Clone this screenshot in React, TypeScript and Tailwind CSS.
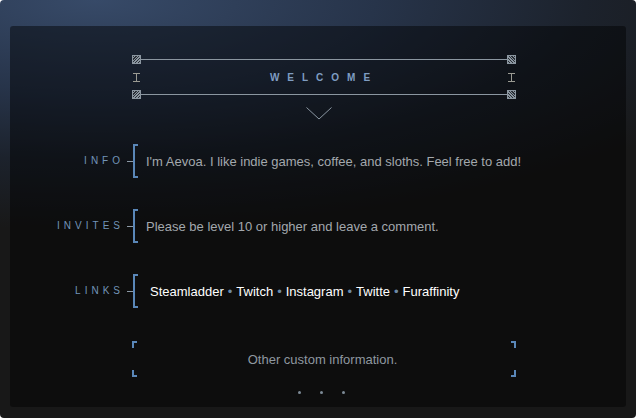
import React from "react"

const Hatch = ({ flip }: { flip?: boolean }) => (
  <div
    className={
      "h-[9px] w-[9px] shrink-0 border border-[#8b96a0] " +
      (flip
        ? "bg-[repeating-linear-gradient(45deg,#8b96a0_0px,#8b96a0_1px,#2a2f36_1px,#2a2f36_2px)]"
        : "bg-[repeating-linear-gradient(-45deg,#8b96a0_0px,#8b96a0_1px,#2a2f36_1px,#2a2f36_2px)]")
    }
  />
)

const IBeam = () => (
  <svg width="7" height="9" viewBox="0 0 7 9" className="shrink-0">
    <path d="M0 0.5H7M3.5 0.5V8.5M0 8.5H7" stroke="#9a9a92" strokeWidth="1" fill="none" />
  </svg>
)

const Row = ({ label, children, link }: { label: string; children: React.ReactNode; link?: boolean }) => (
  <div className="flex h-[34px] items-center">
    <div className="w-[114px] text-right text-[10px] leading-none tracking-[4px] text-[#7294b8]">
      {label}
    </div>
    <div className="ml-[3px] h-px w-[6px] bg-[#8d9aa6]" />
    <div className="h-[34px] w-[5px] border-y-2 border-l-2 border-[#5a87b8]" />
    <div className={link ? "ml-[12px] leading-none" : "ml-[8px] leading-none"}>{children}</div>
  </div>
)

const Sep = () => <span className="mx-[4px] text-[#6d8aa6]">•</span>

export default function App() {
  return (
    <div className="h-[418px] w-[636px] overflow-hidden rounded-[4px] bg-[#181818] font-['Liberation_Sans',Arial,sans-serif]">
      <div className="h-full w-full bg-[radial-gradient(ellipse_110%_55%_at_15%_0%,#374a68_0%,#27344a_40%,#1c222c_70%,#181818_100%)] px-[10px] pb-[11px] pt-[26px]">
        <div className="flex h-full flex-col rounded-[3px] bg-black/45">
          {/* header */}
          <div className="ml-[122px] mt-[29px] w-[384px]">
            <div className="flex h-[9px] items-center">
              <Hatch />
              <div className="h-px flex-1 bg-[#8b96a0]" />
              <Hatch flip />
            </div>
            <div className="flex h-[26px] items-center px-[1px]">
              <IBeam />
              <div className="flex-1 pt-[2px] text-center text-[10px] font-bold leading-none tracking-[8px] text-[#7f9dc2]">WELCOME</div>
              <IBeam />
            </div>
            <div className="flex h-[9px] items-center">
              <Hatch />
              <div className="h-px flex-1 bg-[#8b96a0]" />
              <Hatch flip />
            </div>
          </div>
          <div className="ml-[296px] mt-[8px] flex">
            <svg width="26" height="13" viewBox="0 0 26 13">
              <path d="M0.5 0.5L13 12L25.5 0.5" stroke="#8a96a2" strokeWidth="1" fill="none" />
            </svg>
          </div>

          {/* rows */}
          <div className="mt-[24px] flex flex-col gap-[31px]">
            <Row label="INFO">
              <span className="text-[13px] text-[#a3a8ad]">I'm Aevoa. I like indie games, coffee, and sloths. Feel free to add!</span>
            </Row>
            <Row label="INVITES">
              <span className="text-[13px] text-[#a3a8ad]">Please be level 10 or higher and leave a comment.</span>
            </Row>
            <Row label="LINKS" link>
              <span className="text-[13px] text-white">
                Steamladder<Sep />Twitch<Sep />Instagram<Sep />Twitte<Sep />Furaffinity
              </span>
            </Row>
          </div>

          {/* custom info */}
          <div className="ml-[122px] mt-[33px] flex h-[36px] w-[384px] justify-between">
            <div className="flex flex-col justify-between">
              <div className="h-[7px] w-[5px] border-l-2 border-t-2 border-[#5a87b8]" />
              <div className="h-[7px] w-[5px] border-b-2 border-l-2 border-[#5a87b8]" />
            </div>
            <div className="flex items-center pr-[3px] text-[13px] leading-none text-[#8f98a0]">Other custom information.</div>
            <div className="flex flex-col justify-between">
              <div className="h-[7px] w-[5px] border-r-2 border-t-2 border-[#5a87b8]" />
              <div className="h-[7px] w-[5px] border-b-2 border-r-2 border-[#5a87b8]" />
            </div>
          </div>
          <div className="ml-[288px] mt-[14px] flex gap-[19px]">
            <div className="h-[3px] w-[3px] rounded-full bg-[#7d8a96]" />
            <div className="h-[3px] w-[3px] rounded-full bg-[#7d8a96]" />
            <div className="h-[3px] w-[3px] rounded-full bg-[#7d8a96]" />
          </div>
        </div>
      </div>
    </div>
  )
}
